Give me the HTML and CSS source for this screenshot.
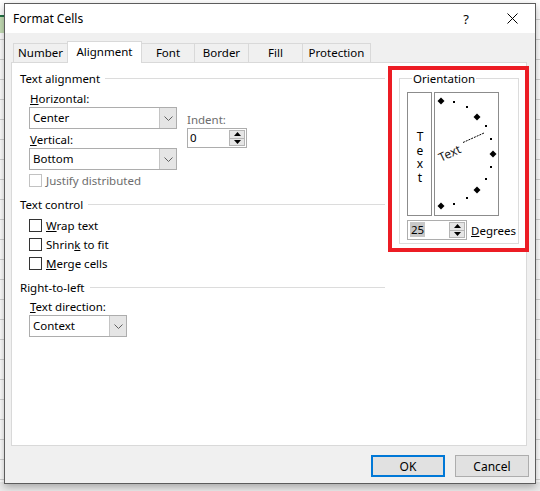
FILE: index.html
```html
<!DOCTYPE html>
<html>
<head>
<meta charset="utf-8">
<title>Format Cells</title>
<link rel="stylesheet" href="styles.css">
</head>
<body>
<div class="dialog">
  <div class="titlebar">
    <span class="title">Format Cells</span>
    <span class="tbtn help">?</span>
    <span class="tbtn close"><svg width="11" height="11" viewBox="0 0 11 11"><path d="M0.5 0.5L10.5 10.5M10.5 0.5L0.5 10.5" stroke="#000" stroke-width="1" fill="none"/></svg></span>
  </div>
  <div class="tabs">
    <div class="tab t-number">Number</div>
    <div class="tab t-align active">Alignment</div>
    <div class="tab t-font">Font</div>
    <div class="tab t-border">Border</div>
    <div class="tab t-fill">Fill</div>
    <div class="tab t-prot">Protection</div>
  </div>
  <div class="panel">
    <div class="left">
      <div class="group-title">Text alignment</div>
      <div class="align-row">
        <div class="align-col">
          <div class="lbl"><u>H</u>orizontal:</div>
          <div class="select sel-wide"><span class="sel-val">Center</span><span class="drop"><svg width="9" height="5" viewBox="0 0 9 5"><path d="M0.5 0.5L4.5 4.5L8.5 0.5" stroke="#606060" fill="none"/></svg></span></div>
          <div class="lbl lbl-2"><u>V</u>ertical:</div>
          <div class="select sel-wide"><span class="sel-val">Bottom</span><span class="drop"><svg width="9" height="5" viewBox="0 0 9 5"><path d="M0.5 0.5L4.5 4.5L8.5 0.5" stroke="#606060" fill="none"/></svg></span></div>
        </div>
        <div class="indent-col">
          <div class="lbl disabled">Indent:</div>
          <div class="spin spin-indent">
            <span class="spin-val">0</span>
            <span class="spin-btns">
              <span class="sb"><svg width="7" height="4" viewBox="0 0 7 4"><path d="M0 4L3.5 0L7 4Z" fill="#000"/></svg></span>
              <span class="sb"><svg width="7" height="4" viewBox="0 0 7 4"><path d="M0 0L3.5 4L7 0Z" fill="#000"/></svg></span>
            </span>
          </div>
        </div>
      </div>
      <div class="check disabled row-justify"><span class="cb"></span><span>Justify distributed</span></div>

      <div class="group-title gt-2">Text control</div>
      <div class="check row-first"><span class="cb"></span><span><u>W</u>rap text</span></div>
      <div class="check row-next"><span class="cb"></span><span>Shrin<u>k</u> to fit</span></div>
      <div class="check row-next"><span class="cb"></span><span><u>M</u>erge cells</span></div>

      <div class="group-title gt-3">Right-to-left</div>
      <div class="lbl lbl-dir"><u>T</u>ext direction:</div>
      <div class="select sel-narrow"><span class="sel-val">Context</span><span class="drop"><svg width="9" height="5" viewBox="0 0 9 5"><path d="M0.5 0.5L4.5 4.5L8.5 0.5" stroke="#606060" fill="none"/></svg></span></div>
    </div>

    <fieldset class="orient">
      <legend>Orientation</legend>
      <div class="orient-boxes">
        <div class="vtext"><span class="vword">Text</span></div>
        <div class="dial">
          <svg width="63" height="122" viewBox="0 0 63 122">
            <g fill="#000">
              <path d="M6 4.5L9.5 8L6 11.5L2.5 8Z"/>
              <path d="M42 20.5L45.5 24L42 27.5L38.5 24Z"/>
              <path d="M58 57.5L61.5 61L58 64.5L54.5 61Z"/>
              <path d="M42 93.5L45.5 97L42 100.5L38.5 97Z"/>
              <path d="M6 109.5L9.5 113L6 116.5L2.5 113Z"/>
              <rect x="18" y="8" width="2" height="2"/>
              <rect x="31" y="13" width="2" height="2"/>
              <rect x="50" y="32" width="2" height="2"/>
              <rect x="55" y="45" width="2" height="2"/>
              <rect x="55" y="73" width="2" height="2"/>
              <rect x="50" y="85" width="2" height="2"/>
              <rect x="31" y="104" width="2" height="2"/>
              <rect x="18" y="110" width="2" height="2"/>
            </g>
            <line x1="28" y1="49.5" x2="49" y2="40" stroke="#000" stroke-width="1" stroke-dasharray="2 1"/>
            <text x="6" y="69" transform="rotate(-25 6 69)" class="dial-text">Text</text>
          </svg>
        </div>
      </div>
      <div class="deg-row">
        <div class="spin spin-deg">
          <span class="spin-val"><span class="selected">25</span></span>
          <span class="spin-btns">
            <span class="sb"><svg width="7" height="4" viewBox="0 0 7 4"><path d="M0 4L3.5 0L7 4Z" fill="#000"/></svg></span>
            <span class="sb"><svg width="7" height="4" viewBox="0 0 7 4"><path d="M0 0L3.5 4L7 0Z" fill="#000"/></svg></span>
          </span>
        </div>
        <span class="deg-lbl"><u>D</u>egrees</span>
      </div>
    </fieldset>

    <div class="annot"></div>
  </div>
  <div class="buttons">
    <div class="btn primary">OK</div>
    <div class="btn">Cancel</div>
  </div>
</div>
</body>
</html>
```

FILE: styles.css
```css
* { box-sizing: border-box; }

html, body { margin: 0; }

body {
  width: 540px;
  height: 491px;
  overflow: hidden;
  padding: 3px 0 0 4px;
  font-family: "Noto Sans", "Open Sans", sans-serif;
  font-size: 11.5px;
  color: #000;
  background-color: #ffffff;
  background-image:
    linear-gradient(#ececec, #ececec),
    linear-gradient(#c6dfb6, #c6dfb6),
    linear-gradient(#217346, #217346),
    repeating-linear-gradient(to bottom, transparent 0 19px, #d4d4d4 19px 20px);
  background-repeat: no-repeat, no-repeat, no-repeat, repeat;
  background-size: 540px 9px, 4px 16px, 4px 2px, auto;
  background-position: 0 482px, 0 17px, 0 15px, 0 0;
}

.dialog {
  width: 532px;
  height: 481px;
  border: 1px solid #5c5c5c;
  background: #f0f0f0;
  box-shadow: 0 3px 8px rgba(0, 0, 0, 0.3);
  display: flex;
  flex-direction: column;
}

/* title bar */
.titlebar {
  height: 29px;
  flex: none;
  background: #fff;
  display: flex;
  align-items: center;
  padding-left: 8px;
  font-size: 12px;
}
.title { flex: 1; }
.tbtn {
  width: 46px;
  height: 29px;
  display: flex;
  align-items: center;
  justify-content: center;
}
.help { font-size: 13px; }

/* tabs */
.tabs {
  height: 29px;
  flex: none;
  display: flex;
  align-items: flex-end;
  margin-left: 6px;
  padding-left: 2px;
  position: relative;
  z-index: 1;
}
.tab {
  height: 19px;
  border: 1px solid #d9d9d9;
  border-bottom: 0;
  background: #f0f0f0;
  margin-right: -1px;
  display: flex;
  align-items: center;
  justify-content: center;
  padding-bottom: 1px;
}
.tab.active {
  height: 22px;
  background: #fff;
  margin-bottom: -1px;
  padding-bottom: 2px;
}
.t-number { width: 55px; }
.t-align { width: 75px; }
.t-font { width: 54px; }
.t-border { width: 55px; }
.t-fill { width: 55px; }
.t-prot { width: 69px; }

/* panel */
.panel {
  flex: none;
  margin-left: 6px;
  width: 516px;
  height: 384px;
  border: 1px solid #d9d9d9;
  background: #fff;
  display: flex;
  align-items: flex-start;
  padding: 8px 0 0 8px;
  position: relative;
}

.left {
  width: 365px;
  display: flex;
  flex-direction: column;
}

.group-title {
  height: 15px;
  line-height: 15px;
  display: flex;
  align-items: center;
  white-space: nowrap;
}
.group-title::after {
  content: "";
  flex: 1;
  height: 1px;
  margin-left: 5px;
  background: #dcdcdc;
}
.gt-2 { margin-top: 9px; }
.gt-3 { margin-top: 9px; }

.lbl {
  height: 15px;
  line-height: 15px;
  margin-left: 10px;
  margin-bottom: 1px;
}
.lbl-2 { margin-top: 3px; }
.lbl-dir { margin-top: 4px; }
.disabled { color: #6d6d6d; }

.align-row {
  display: flex;
  margin-top: 5px;
}
.align-col {
  display: flex;
  flex-direction: column;
}

.select {
  height: 22px;
  margin-left: 9px;
  border: 1px solid #adadad;
  background: #fff;
  display: flex;
  align-items: stretch;
}
.sel-wide { width: 148px; }
.sel-narrow { width: 98px; }
.sel-val {
  flex: 1;
  padding-left: 3px;
  line-height: 20px;
}
.drop {
  width: 17px;
  background: #e5e5e5;
  border-left: 1px solid #c4c4c4;
  display: flex;
  align-items: center;
  justify-content: center;
}

.indent-col {
  margin-left: 10px;
  margin-top: 21px;
  display: flex;
  flex-direction: column;
}
.indent-col .lbl { margin-left: 0; }

.spin {
  height: 20px;
  border: 1px solid #adadad;
  background: #fff;
  display: flex;
}
.spin-indent { width: 60px; }
.spin-deg { width: 60px; }
.spin-val {
  flex: 1;
  padding-left: 2px;
  line-height: 18px;
}
.spin-btns {
  width: 17px;
  display: flex;
  flex-direction: column;
  padding: 1px 1px 1px 0;
}
.sb {
  flex: 1;
  background: #e5e5e5;
  border: 1px solid #b5b5b5;
  display: flex;
  align-items: center;
  justify-content: center;
}
.sb + .sb { border-top: 0; }
.selected {
  background: #c8c8c8;
  padding: 0 1px;
}

.check {
  height: 15px;
  line-height: 15px;
  display: flex;
  align-items: center;
  margin-left: 9px;
  gap: 4px;
}
.cb {
  width: 13px;
  height: 13px;
  border: 1px solid #333;
  background: #fff;
}
.check.disabled .cb { border-color: #c2c2c2; }
.row-justify { margin-top: 3px; }
.row-first { margin-top: 6px; }
.row-next { margin-top: 4px; }

/* orientation */
.orient {
  margin: 0 0 0 14px;
  padding: 6px 0 3px 7px;
  width: 120px;
  border: 1px solid #dcdcdc;
  min-width: 0;
}
.orient legend {
  padding: 0 1px;
  margin-left: 5px;
  line-height: 15px;
  height: 15px;
}
.orient-boxes {
  display: flex;
  gap: 2px;
}
.vtext {
  width: 25px;
  height: 124px;
  border: 1px solid #8c8c8c;
  display: flex;
  align-items: center;
  justify-content: center;
  padding-top: 3px;
}
.vword {
  writing-mode: vertical-lr;
  text-orientation: upright;
  font-size: 12px;
  line-height: 14px;
  letter-spacing: -3.3px;
}
.dial {
  width: 65px;
  height: 124px;
  border: 1px solid #8c8c8c;
}
.dial svg { display: block; }
.dial-text {
  font-family: "Noto Sans", sans-serif;
  font-size: 12px;
  fill: #1a1a1a;
}
.deg-row {
  margin-top: 4px;
  display: flex;
  align-items: center;
  gap: 4px;
}

/* red annotation frame */
.annot {
  position: absolute;
  left: 376px;
  top: 3px;
  width: 141px;
  height: 186px;
  border: 4px solid #ec1c24;
}

/* buttons */
.buttons {
  display: flex;
  justify-content: flex-end;
  gap: 10px;
  margin-top: 9px;
  padding-right: 6px;
}
.btn {
  width: 74px;
  height: 22px;
  background: #e1e1e1;
  border: 1px solid #adadad;
  display: flex;
  align-items: center;
  justify-content: center;
  font-size: 12px;
}
.btn.primary { border: 2px solid #0078d7; }
```
